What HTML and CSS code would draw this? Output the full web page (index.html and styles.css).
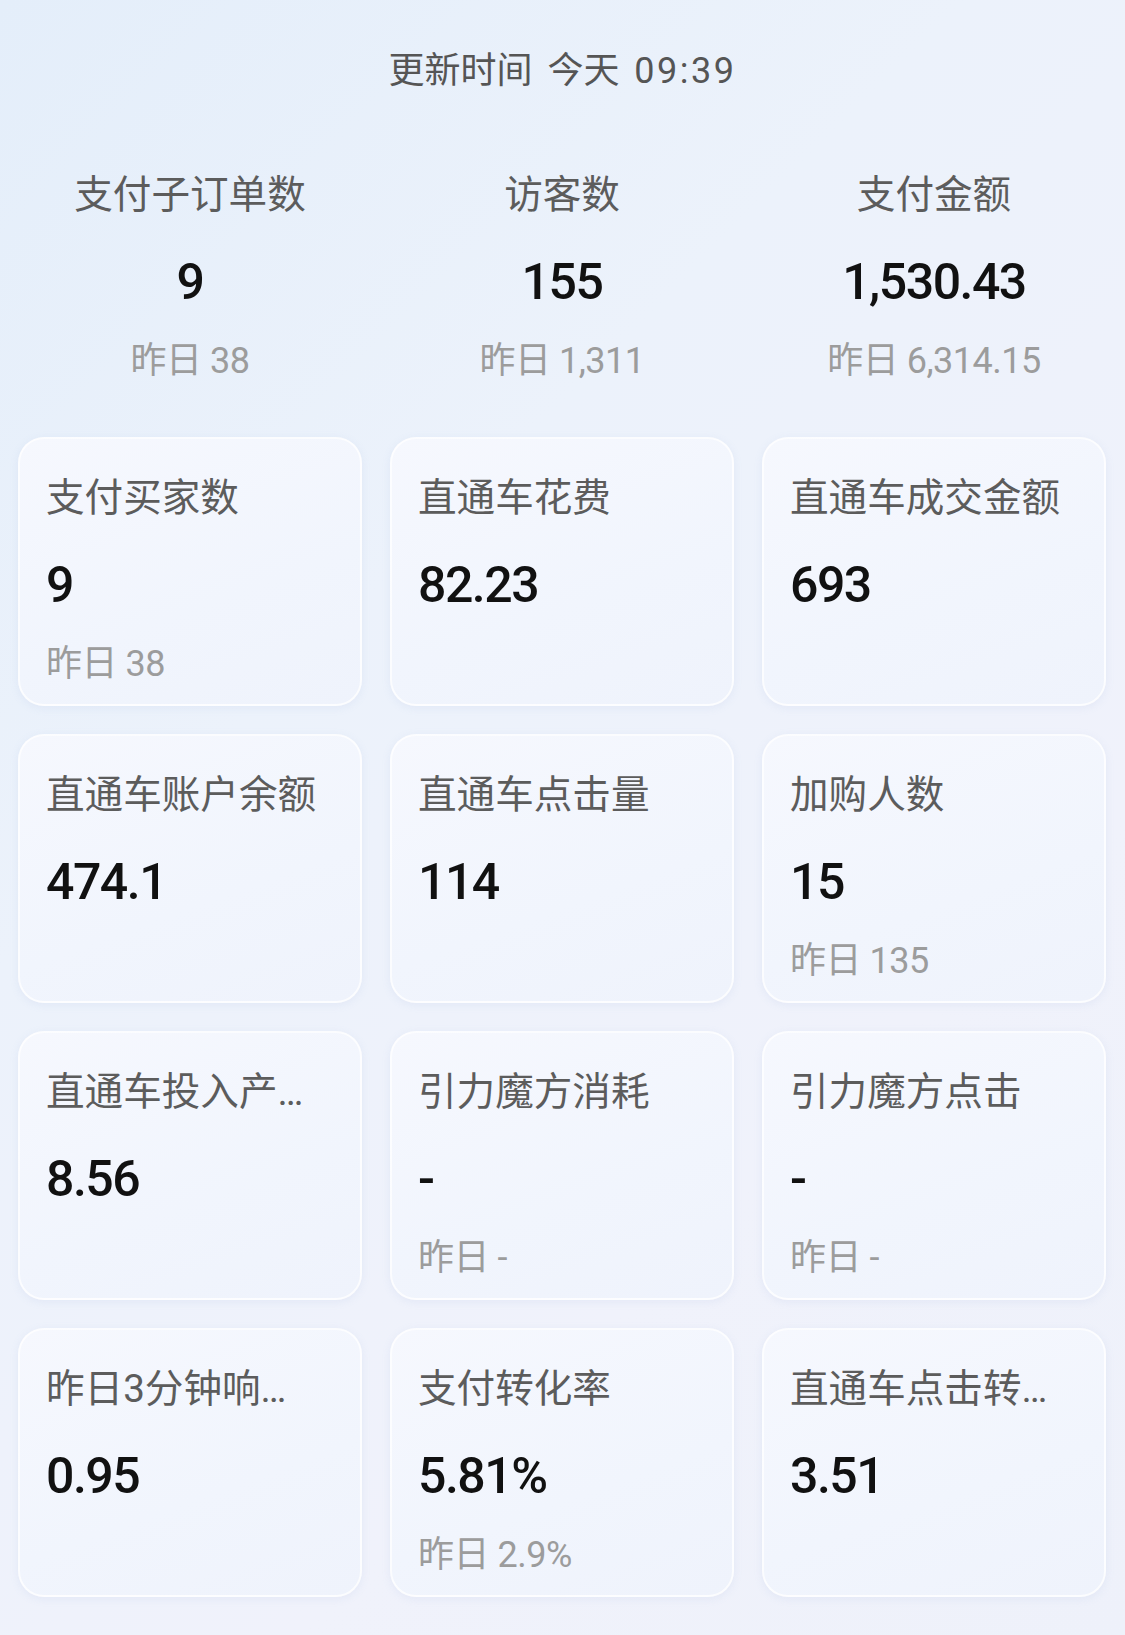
FILE: index.html
```html
<!DOCTYPE html>
<html lang="zh-CN">
  <head>
    <meta charset="UTF-8" />
    <meta name="viewport" content="width=device-width, initial-scale=1.0" />
    <title>实时数据</title>
    <link rel="stylesheet" href="styles.css">
  </head>
  <body>
    <!-- 更新时间 -->
    <div class="update">更新时间 今天 <span class="time">09:39</span></div>

    <!-- 核心指标 -->
    <section class="summary">
      <div class="stat">
        <div class="label">支付子订单数</div>
        <div class="value">9</div>
        <div class="prev">昨日 38</div>
      </div>
      <div class="stat">
        <div class="label">访客数</div>
        <div class="value">155</div>
        <div class="prev">昨日 1,311</div>
      </div>
      <div class="stat">
        <div class="label">支付金额</div>
        <div class="value">1,530.43</div>
        <div class="prev">昨日 6,314.15</div>
      </div>
    </section>

    <!-- 指标卡片 -->
    <section class="cards">
      <div class="card">
        <div class="label">支付买家数</div>
        <div class="value">9</div>
        <div class="prev">昨日 38</div>
      </div>
      <div class="card">
        <div class="label">直通车花费</div>
        <div class="value">82.23</div>
      </div>
      <div class="card">
        <div class="label">直通车成交金额</div>
        <div class="value">693</div>
      </div>

      <div class="card">
        <div class="label">直通车账户余额</div>
        <div class="value">474.1</div>
      </div>
      <div class="card">
        <div class="label">直通车点击量</div>
        <div class="value">114</div>
      </div>
      <div class="card">
        <div class="label">加购人数</div>
        <div class="value">15</div>
        <div class="prev">昨日 135</div>
      </div>

      <div class="card">
        <div class="label" title="直通车投入产出比">直通车投入产…</div>
        <div class="value">8.56</div>
      </div>
      <div class="card">
        <div class="label">引力魔方消耗</div>
        <div class="value">-</div>
        <div class="prev">昨日 -</div>
      </div>
      <div class="card">
        <div class="label">引力魔方点击</div>
        <div class="value">-</div>
        <div class="prev">昨日 -</div>
      </div>

      <div class="card">
        <div class="label" title="昨日3分钟响应率">昨日3分钟响…</div>
        <div class="value">0.95</div>
      </div>
      <div class="card">
        <div class="label">支付转化率</div>
        <div class="value">5.81%</div>
        <div class="prev">昨日 2.9%</div>
      </div>
      <div class="card">
        <div class="label" title="直通车点击转化率">直通车点击转…</div>
        <div class="value">3.51</div>
      </div>
    </section>
  </body>
</html>
```

FILE: styles.css
```css
body {
  margin: 0;
  width: 1125px;
  min-height: 1635px;
  font-family: Roboto, "Noto Sans CJK SC", sans-serif;
  background: linear-gradient(135deg, #e4eefa 0%, #ecf2fb 35%, #f0f2fb 70%, #eef1fa 100%);
  color: #111;
}
.update {
  padding-top: 47px;
  font-size: 36px;
  line-height: 48px;
  text-align: center;
  word-spacing: 6px;
  color: #555;
}
.time {
  letter-spacing: 2.5px;
}
.summary,
.cards {
  display: grid;
  grid-template-columns: repeat(3, 1fr);
  column-gap: 28px;
  padding: 0 19px 0 18px;
}
.summary {
  margin-top: 75px;
  text-align: center;
}
.cards {
  margin-top: 53px;
  grid-auto-rows: 269px;
  row-gap: 28px;
  padding-bottom: 37px;
}
.label {
  font-size: 38.6px;
  line-height: 50px;
  color: #5c5c5c;
  white-space: nowrap;
  overflow: hidden;
  text-overflow: ellipsis;
}
.value {
  margin-top: 32px;
  font-size: 50px;
  line-height: 60px;
  font-weight: 500;
  letter-spacing: -1.5px;
  color: #111;
}
.prev {
  margin-top: 26px;
  font-size: 36px;
  line-height: 46px;
  letter-spacing: -0.5px;
  color: #9c9c9c;
}
.card {
  box-sizing: border-box;
  padding: 34px 26px 0;
  border: 2px solid rgba(255, 255, 255, 0.75);
  border-radius: 26px;
  background: linear-gradient(160deg, #f6f8fe 0%, #f1f5fd 60%, #eff3fc 100%);
  box-shadow: 0 2px 8px rgba(140, 165, 210, 0.12);
  overflow: hidden;
}
```
